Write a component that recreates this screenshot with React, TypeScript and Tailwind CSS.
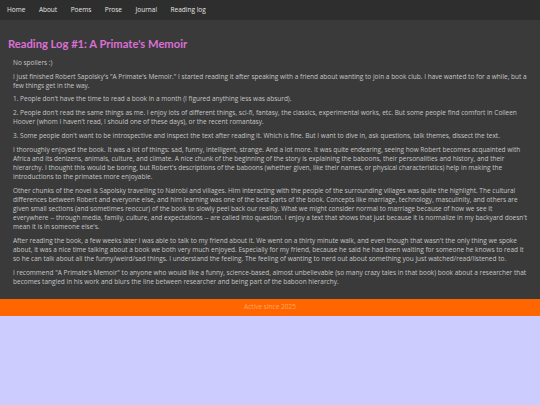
const navItems = ["Home", "About", "Poems", "Prose", "Journal", "Reading log"];

const paragraphs = [
  "No spoilers :)",
  "I just finished Robert Sapolsky's \"A Primate's Memoir.\" I started reading it after speaking with a friend about wanting to join a book club. I have wanted to for a while, but a few things get in the way.",
  "1. People don't have the time to read a book in a month (I figured anything less was absurd).",
  "2. People don't read the same things as me. I enjoy lots of different things, sci-fi, fantasy, the classics, experimental works, etc. But some people find comfort in Colleen Hoover (whom I haven't read, I should one of these days), or the recent romantasy.",
  "3. Some people don't want to be introspective and inspect the text after reading it. Which is fine. But I want to dive in, ask questions, talk themes, dissect the text.",
  "I thoroughly enjoyed the book. It was a lot of things: sad, funny, intelligent, strange. And a lot more. It was quite endearing, seeing how Robert becomes acquainted with Africa and its denizens, animals, culture, and climate. A nice chunk of the beginning of the story is explaining the baboons, their personalities and history, and their hierarchy. I thought this would be boring, but Robert's descriptions of the baboons (whether given, like their names, or physical characteristics) help in making the introductions to the primates more enjoyable.",
  "Other chunks of the novel is Sapolsky travelling to Nairobi and villages. Him interacting with the people of the surrounding villages was quite the highlight. The cultural differences between Robert and everyone else, and him learning was one of the best parts of the book. Concepts like marriage, technology, masculinity, and others are given small sections (and sometimes reoccur) of the book to slowly peel back our reality. What we might consider normal to marriage because of how we see it everywhere -- through media, family, culture, and expectations -- are called into question. I enjoy a text that shows that just because it is normalize in my backyard doesn't mean it is in someone else's.",
  "After reading the book, a few weeks later I was able to talk to my friend about it. We went on a thirty minute walk, and even though that wasn't the only thing we spoke about, it was a nice time talking about a book we both very much enjoyed. Especially for my friend, because he said he had been waiting for someone he knows to read it so he can talk about all the funny/weird/sad things. I understand the feeling. The feeling of wanting to nerd out about something you just watched/read/listened to.",
  "I recommend \"A Primate's Memoir\" to anyone who would like a funny, science-based, almost unbelievable (so many crazy tales in that book) book about a researcher that becomes tangled in his work and blurs the line between researcher and being part of the baboon hierarchy.",
];

export default function App() {
  return (
    <div className="min-h-[405px] bg-[#ccccff] font-['Open_Sans',sans-serif]">
      <nav className="flex h-[20px] items-center gap-[13.5px] bg-[#2e2e2e] pl-[7px] text-[6.5px] text-[#e4e4e4]">
        {navItems.map((item) => (
          <a key={item} href="#">
            {item}
          </a>
        ))}
      </nav>

      <main className="bg-[#3a3a3a] px-[8px] pt-[17px] pb-[13px]">
        <h1 className="mb-[7px] font-['Lato',sans-serif] text-[11.2px] leading-[14px] font-bold text-[#da70d6]">
          Reading Log #1: A Primate's Memoir
        </h1>
        <div className="flex flex-col gap-[4.6px] pr-[4px] pl-[5px] text-[6.5px] leading-[9.1px] text-[#c6c6c6]">
          {paragraphs.map((p, i) => (
            <p key={i}>{p}</p>
          ))}
        </div>
      </main>

      <footer className="flex h-[17px] items-center justify-center bg-[#ff6600] text-[6.5px] text-[#ffa866]">
        Active since 2025
      </footer>
    </div>
  );
}
